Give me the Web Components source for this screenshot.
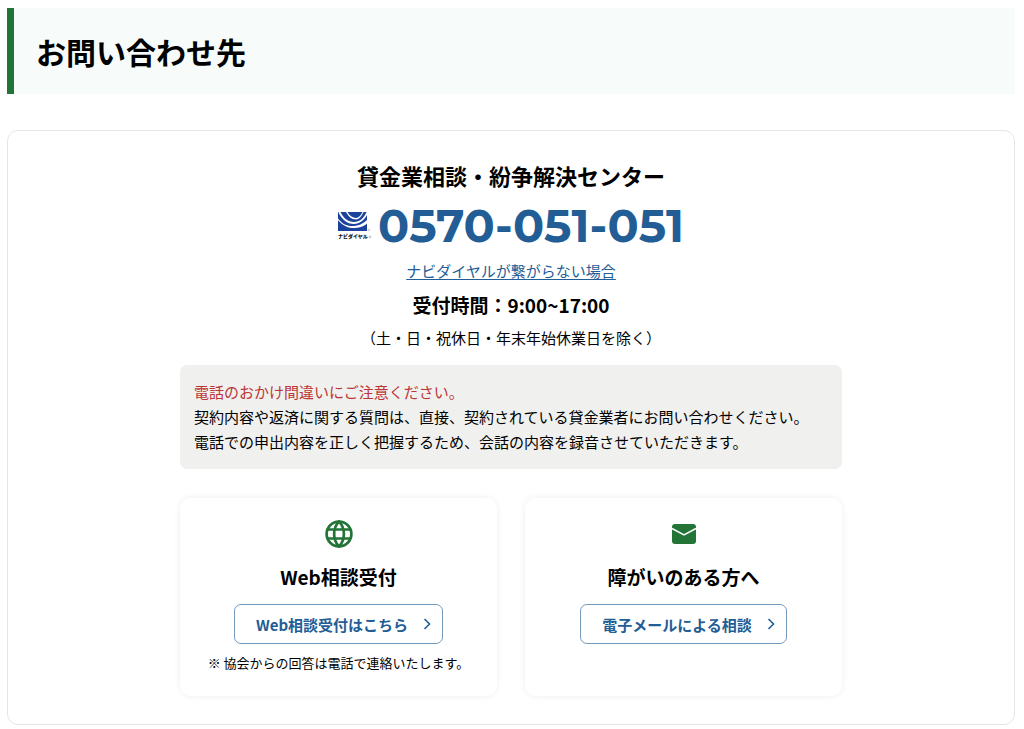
<!DOCTYPE html>
<html lang="ja">
<head>
<meta charset="utf-8">
<meta name="viewport" content="width=device-width, initial-scale=1">
<title>お問い合わせ先</title>
<style>
  body {
    margin: 8px 9px 3px 7px;
    background: #fff;
    color: #000;
    font: 15px/25px "Noto Sans CJK JP", sans-serif;
    --green: #237437;
    --blue: #235d95;
    --red: #bd3637;
  }
</style>
</head>
<body>
<contact-page></contact-page>

<script>
class BaseElement extends HTMLElement {
  connectedCallback() {
    if (this.shadowRoot) return;
    const template = document.createElement("template");
    template.innerHTML = this.constructor.markup;
    this.attachShadow({ mode: "open" }).append(template.content.cloneNode(true));
  }
}

customElements.define("page-heading", class extends BaseElement {
  static markup = `
    <style>
      :host { display: block; background: #f7fbfa; border-left: 7px solid var(--green); padding: 21px 22px; }
      h1 { margin: 0; font-size: 30px; line-height: 44px; font-weight: 700; }
    </style>
    <h1><slot></slot></h1>`;
});

customElements.define("navi-logo", class extends BaseElement {
  static markup = `
    <style>
      :host { display: block; }
      svg { display: block; }
    </style>
    <svg width="34" height="28" viewBox="0 0 34 28" role="img" aria-label="ナビダイヤル">
      <clipPath id="flag"><rect x="0" y="0" width="29" height="19"/></clipPath>
      <rect x="0" y="0" width="29" height="19" fill="#1b439c"/>
      <g clip-path="url(#flag)" fill="#fff">
        <path d="M-1 5C3 11 8 14 14 14C20 14 25 12 30 7V11C25 15 20 16.500 14 16C8 15.500 3 12 -1 7Z"/>
        <path d="M2 -1C5 6 10 10 16 10C22 10 26 6 29 -1L30 1C27 8 22 12 16 12C9 12 3 7 0 -1Z"/>
        <path d="M9 -1C11 3 14 6 18 6C21 6 23 3 25 -1H26C24 4 21 7.500 18 7.500C13 7.500 10 4 7.500 -1Z"/>
      </g>
      <text x="0" y="26" font-family="Noto Sans CJK JP, sans-serif" font-size="5" font-weight="900" fill="#111">ナビダイヤル</text>
      <circle cx="31" cy="18" r="1" fill="none" stroke="#aaa" stroke-width=".5"/>
      <circle cx="32" cy="25" r="1" fill="none" stroke="#888" stroke-width=".5"/>
    </svg>`;
});

customElements.define("phone-number", class extends BaseElement {
  static markup = `
    <style>
      :host { display: flex; justify-content: center; align-items: center; gap: 6px; }
      span { color: var(--blue); font: 700 46px/53px Montserrat, Inter, sans-serif; }
    </style>
    <navi-logo></navi-logo><span><slot></slot></span>`;
});

customElements.define("notice-box", class extends BaseElement {
  static markup = `
    <style>
      :host { display: block; background: #f0f0ee; border-radius: 7px; padding: 14px 14px 15px; text-align: left; }
      p { margin: 0; }
      .warning { color: var(--red); }
    </style>
    <p class="warning"><slot name="warning"></slot></p>
    <p><slot></slot></p>`;
});

customElements.define("arrow-link", class extends BaseElement {
  static markup = `
    <style>
      :host { display: inline-block; }
      a { display: flex; align-items: center; gap: 15px; box-sizing: border-box; height: 40px; padding: 0 11px 0 21px;
          border: 1px solid #7599bd; border-radius: 7px; color: var(--blue); font-weight: 700; text-decoration: none; }
      svg { display: block; }
    </style>
    <a href="#"><slot></slot>
      <svg width="8" height="12" viewBox="0 0 8 12" fill="none" stroke="#235d95" stroke-width="1.6" aria-hidden="true"><path d="M1.500 1L6.500 6L1.500 11"/></svg>
    </a>`;
});

customElements.define("globe-icon", class extends BaseElement {
  static markup = `
    <style>:host { display: block; } svg { display: block; }</style>
    <svg width="28" height="28" viewBox="0 0 28 28" fill="none" stroke="#237437" stroke-width="2.700" aria-hidden="true">
      <circle cx="14" cy="14" r="12.400"/>
      <path d="M14 1.500C7.500 8 7.500 20 14 26.500C20.500 20 20.500 8 14 1.500ZM2.500 9.500H25.500M2.500 18.500H25.500"/>
    </svg>`;
});

customElements.define("mail-icon", class extends BaseElement {
  static markup = `
    <style>:host { display: block; } svg { display: block; }</style>
    <svg width="28" height="28" viewBox="0 0 28 28" aria-hidden="true">
      <rect x="2" y="4" width="24" height="20" rx="3" fill="#237437"/>
      <path d="M2 8.500L14 14.800L26 8.500" fill="none" stroke="#fff" stroke-width="1.500"/>
    </svg>`;
});

customElements.define("method-card", class extends BaseElement {
  static markup = `
    <style>
      :host { display: flex; flex-direction: column; align-items: center; padding: 22px 14px 21px; border-radius: 11px;
              background: #fff; box-shadow: 0 0 7px rgba(0, 0, 0, .07); }
      h3 { margin: 15px 0 13px; font-size: 19px; line-height: 28px; font-weight: 700; }
      ::slotted(p) { margin: 11px 0 0; font-size: 13px; line-height: 20px; }
    </style>
    <slot name="icon"></slot>
    <h3><slot name="title"></slot></h3>
    <slot name="action"></slot>
    <slot></slot>`;
});

customElements.define("contact-panel", class extends BaseElement {
  static markup = `
    <style>
      :host { display: block; margin-top: 36px; padding: 28px; border: 1px solid #e6e6e6; border-radius: 11px; text-align: center; }
      .inner { max-width: 662px; margin: 0 auto; }
      h2 { margin: 0 0 8px; font-size: 22px; line-height: 32px; font-weight: 700; }
      p { margin: 7px 0 0; line-height: 24px; }
      a { color: var(--blue); text-underline-offset: 2px; }
      .hours { margin-top: 8px; font-size: 19px; line-height: 28px; font-weight: 700; }
      notice-box { margin-top: 15px; }
      .methods { display: grid; grid-template-columns: repeat(auto-fit, minmax(280px, 1fr)); gap: 28px; margin-top: 29px; }
    </style>
    <div class="inner">
      <h2>貸金業相談・紛争解決センター</h2>
      <phone-number>0570-051-051</phone-number>
      <p><a href="#">ナビダイヤルが繋がらない場合</a></p>
      <p class="hours">受付時間：9:00~17:00</p>
      <p>（土・日・祝休日・年末年始休業日を除く）</p>
      <notice-box>
        <span slot="warning">電話のおかけ間違いにご注意ください。</span>契約内容や返済に関する質問は、直接、契約されている貸金業者にお問い合わせください。<br>電話での申出内容を正しく把握するため、会話の内容を録音させていただきます。
      </notice-box>
      <div class="methods">
        <method-card>
          <globe-icon slot="icon"></globe-icon>
          <span slot="title">Web相談受付</span>
          <arrow-link slot="action">Web相談受付はこちら</arrow-link>
          <p>※ 協会からの回答は電話で連絡いたします。</p>
        </method-card>
        <method-card>
          <mail-icon slot="icon"></mail-icon>
          <span slot="title">障がいのある方へ</span>
          <arrow-link slot="action">電子メールによる相談</arrow-link>
        </method-card>
      </div>
    </div>`;
});

customElements.define("contact-page", class extends BaseElement {
  static markup = `
    <style>:host { display: block; }</style>
    <page-heading>お問い合わせ先</page-heading>
    <contact-panel></contact-panel>`;
});
</script>
</body>
</html>
